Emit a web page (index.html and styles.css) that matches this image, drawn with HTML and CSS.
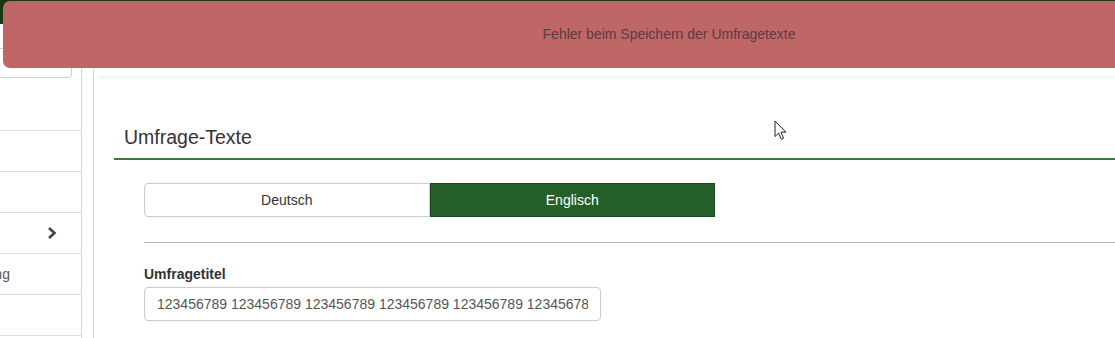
FILE: index.html
```html
<!DOCTYPE html>
<html>

<head>
    <title>Umfrage bearbeiten</title>
    <link rel="stylesheet" href="styles.css">
</head>

<body>
    <div class="topbar"></div>

    <div class="layout">
        <aside class="sidebar">
            <div class="nav">
                <div class="search">
                    <input type="text" class="search-input">
                </div>
                <ul class="menu">
                    <li></li>
                    <li></li>
                    <li>
                        <span></span>
                        <svg class="chevron" width="10" height="14" viewBox="0 0 10 14">
                            <polyline points="2,2 7.5,7 2,12" fill="none" stroke="#444" stroke-width="2.6" />
                        </svg>
                    </li>
                    <li>Auswertung</li>
                    <li></li>
                    <li></li>
                </ul>
            </div>
        </aside>

        <main class="main">
            <div class="topcard"></div>

            <section class="texts">
                <h2>Umfrage-Texte</h2>

                <div class="tabs">
                    <button class="tab">Deutsch</button>
                    <button class="tab active">Englisch</button>
                </div>

                <hr class="divider">

                <label class="field-label" for="title">Umfragetitel</label>
                <input type="text" id="title" class="field"
                    value="123456789 123456789 123456789 123456789 123456789 12345678">
            </section>
        </main>
    </div>

    <div class="alert">Fehler beim Speichern der Umfragetexte</div>

    <svg class="cursor" width="14" height="21" viewBox="0 0 14 21">
        <path d="M1,1 L1,16.5 L4.6,13 L7.3,19.3 L9.6,18.3 L7,12.2 L12,12.2 Z" fill="#fff" stroke="#222"
            stroke-width="1" stroke-linejoin="round" />
    </svg>
</body>

</html>
```

FILE: styles.css
```css
html,
body {
    margin: 0;
    height: 338px;
    overflow: hidden;
    background: #fff;
    font-family: "Liberation Sans", Arial, sans-serif;
    font-size: 14px;
    color: #333;
}

.topbar {
    height: 24px;
    background-color: #19380f;
}

.layout {
    display: flex;
    height: 314px;
}

/* sidebar, scrolled so only its right part shows */
.sidebar {
    width: 81px;
    border-right: 1px solid #d4d4d4;
    margin-right: 11px;
    overflow: hidden;
    flex-shrink: 0;
}

.nav {
    width: 240px;
    margin-left: -159px;
}

.search {
    padding: 24px 9px 0 0;
}

.search-input {
    display: block;
    width: 100%;
    height: 30px;
    box-sizing: border-box;
    border: 1px solid #ccc;
    border-radius: 4px;
    font-family: inherit;
}

.menu {
    list-style: none;
    margin: 52px 0 0 0;
    padding: 0;
}

.menu li {
    display: flex;
    align-items: center;
    justify-content: space-between;
    height: 40px;
    border-top: 1px solid #dedede;
    padding: 0 24px 0 95px;
    color: #555;
}

.chevron {
    display: block;
}

.main {
    flex: 1;
    border-left: 1px solid #d6d6d6;
    padding-left: 5px;
    min-width: 0;
}

.topcard {
    height: 52px;
    background: #fff;
    box-shadow: 0 2px 3px rgba(0, 0, 0, 0.06);
}

.texts {
    margin: 50px 0 0 15px;
}

.texts h2 {
    margin: 0;
    padding: 0 10px 10px;
    font-size: 19.5px;
    font-weight: normal;
    line-height: 22px;
    color: #333;
    border-bottom: 2px solid #3b7c3e;
}

.tabs {
    display: flex;
    width: 571px;
    margin: 23px 0 0 30px;
}

.tab {
    flex: 1;
    height: 34px;
    border: 1px solid #ccc;
    background: #fff;
    font-family: inherit;
    font-size: 14px;
    color: #333;
    padding: 0;
    border-radius: 4px 0 0 4px;
}

.tab.active {
    background-color: #245f29;
    border-color: #1b4a1f;
    color: #fff;
    border-radius: 0;
}

.divider {
    margin: 25px 0 0 30px;
    border: 0;
    border-top: 1px solid #a8c1a8;
}

.field-label {
    display: block;
    margin: 21px 0 3px 30px;
    font-weight: bold;
    line-height: 20px;
}

.field {
    display: block;
    width: 457px;
    height: 34px;
    box-sizing: border-box;
    margin-left: 30px;
    padding: 0 12px;
    border: 1px solid #ccc;
    border-radius: 4px;
    font-family: inherit;
    font-size: 14px;
    color: #555;
}

/* overlays */
.alert {
    position: absolute;
    left: 3px;
    top: 1px;
    width: 1332px;
    height: 67px;
    line-height: 67px;
    border-radius: 7px;
    background-color: #bf6767;
    color: #5c3b43;
    text-align: center;
    font-size: 14px;
}

.cursor {
    position: absolute;
    left: 774px;
    top: 120px;
}
```
